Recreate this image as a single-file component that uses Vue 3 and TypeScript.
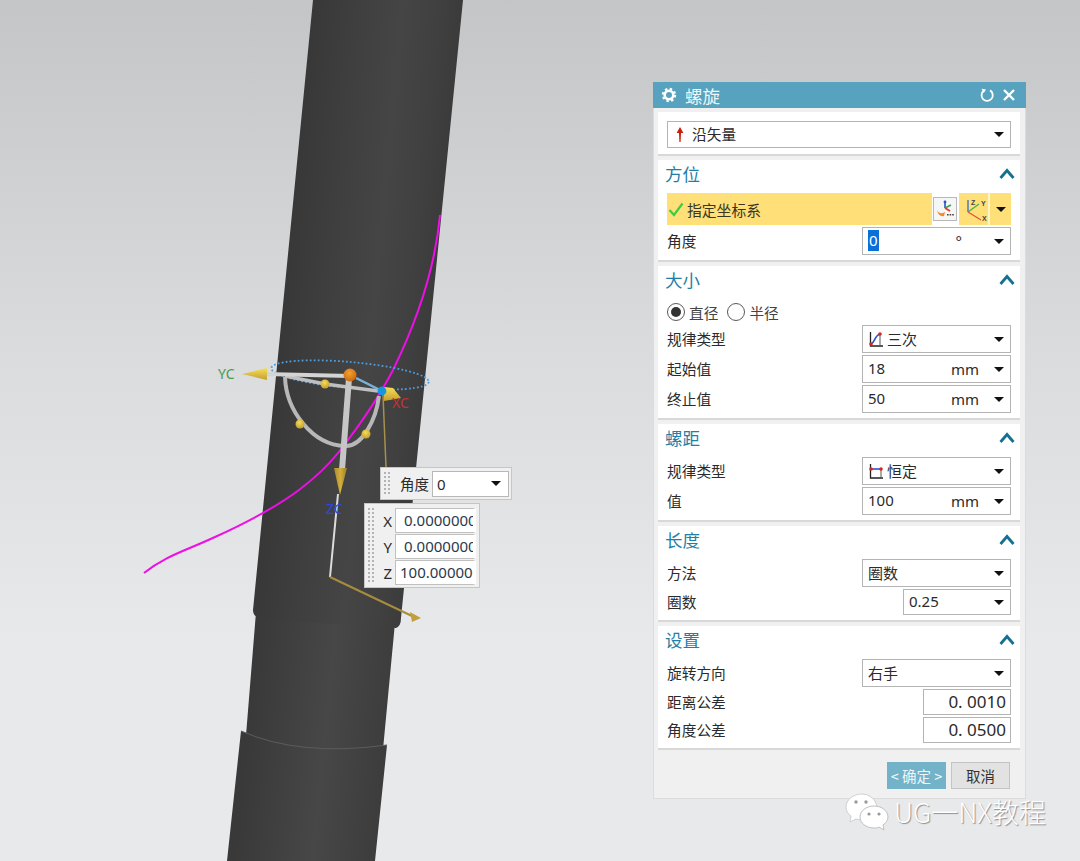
<script setup lang="ts">
type Row = {
  label: string
  value: string
  unit?: string
  icon?: 'cubic' | 'flat'
  size?: 'sm' | 'xs'
  caret?: boolean
}
type Section = { title: string; cls: string; rows: Row[] }

const sizeRows: Row[] = [
  { label: '规律类型', value: '三次', icon: 'cubic', caret: true },
  { label: '起始值', value: '18', unit: 'mm', caret: true },
  { label: '终止值', value: '50', unit: 'mm', caret: true },
]

const sections: Section[] = [
  {
    title: '螺距',
    cls: 'sec-pitch',
    rows: [
      { label: '规律类型', value: '恒定', icon: 'flat', caret: true },
      { label: '值', value: '100', unit: 'mm', caret: true },
    ],
  },
  {
    title: '长度',
    cls: 'sec-length',
    rows: [
      { label: '方法', value: '圈数', caret: true },
      { label: '圈数', value: '0.25', size: 'sm', caret: true },
    ],
  },
  {
    title: '设置',
    cls: 'sec-settings',
    rows: [
      { label: '旋转方向', value: '右手', caret: true },
      { label: '距离公差', value: '0. 0010', size: 'xs' },
      { label: '角度公差', value: '0. 0500', size: 'xs' },
    ],
  },
]

// the boxes are narrower than the values, as in NX
const coords = [
  { axis: 'X', value: '0.00000000', pad: 8 },
  { axis: 'Y', value: '0.00000000', pad: 8 },
  { axis: 'Z', value: '100.00000000', pad: 4 },
]
</script>

<template>
  <div class="stage">
    <!-- model and handles -->
    <svg class="scene" width="1080" height="861" viewBox="0 0 1080 861">
      <defs>
        <linearGradient id="bodyA" gradientUnits="userSpaceOnUse" x1="313" y1="0" x2="461" y2="14">
          <stop offset="0" stop-color="#383838" />
          <stop offset="0.3" stop-color="#3f3f3f" />
          <stop offset="0.6" stop-color="#454545" />
          <stop offset="0.85" stop-color="#404040" />
          <stop offset="1" stop-color="#3b3b3b" />
        </linearGradient>
        <linearGradient id="bodyB" gradientUnits="userSpaceOnUse" x1="250" y1="700" x2="392" y2="714">
          <stop offset="0" stop-color="#393939" />
          <stop offset="0.55" stop-color="#474747" />
          <stop offset="1" stop-color="#3c3c3c" />
        </linearGradient>
        <linearGradient id="cone" x1="0" y1="0" x2="0" y2="1">
          <stop offset="0" stop-color="#f7de58" />
          <stop offset="1" stop-color="#c4a02e" />
        </linearGradient>
        <linearGradient id="coneDark" x1="0" y1="0" x2="1" y2="0">
          <stop offset="0" stop-color="#a98c30" />
          <stop offset="0.5" stop-color="#d2ae3c" />
          <stop offset="1" stop-color="#9a7f2a" />
        </linearGradient>
        <radialGradient id="ballOrange" cx="0.45" cy="0.35" r="0.7">
          <stop offset="0" stop-color="#f5a030" />
          <stop offset="1" stop-color="#c8640c" />
        </radialGradient>
        <radialGradient id="ballYellow" cx="0.45" cy="0.35" r="0.7">
          <stop offset="0" stop-color="#f5dc5a" />
          <stop offset="1" stop-color="#c09a28" />
        </radialGradient>
      </defs>

      <polygon points="256,612 396,612 382,760 244,760" fill="url(#bodyB)" />
      <path d="M241 731 Q300 757 387 745 L375 861 L227 861 Z" fill="url(#bodyB)" />
      <path d="M241 731 Q300 757 387 745" fill="none" stroke="#5c5c5c" stroke-width="1" />
      <path d="M313 0 L463 0 L401 618 Q401 626 396 628 L300 622 L257 617 Q253 615 253 610 Z" fill="url(#bodyA)" />

      <path
        d="M144 573 C165 556 185 551 215 537 C250 521 275 508 299 490 C320 474 330 463 338 453 C360 425 380 395 393 370 C415 325 435 270 440 215"
        fill="none" stroke="#ee0fe6" stroke-width="2"
      />

      <ellipse
        cx="350" cy="375" rx="79" ry="13" transform="rotate(5 350 375)"
        fill="none" stroke="#4a9ee0" stroke-width="1.8" stroke-dasharray="1.8 2.2"
      />

      <path d="M285 377 C286 410 312 445 345 446 C362 447 376 420 379 396" fill="none" stroke="#b8b8b8" stroke-width="4" />
      <path d="M285 376 L325 384 L378 391" fill="none" stroke="#bfbfbf" stroke-width="3.5" />
      <line x1="356" y1="378" x2="382" y2="391" stroke="#7ab4d8" stroke-width="2.5" />
      <line x1="265" y1="374" x2="350" y2="376" stroke="#d4d4d4" stroke-width="4" />
      <line x1="349" y1="378" x2="342" y2="470" stroke="#c6c6c6" stroke-width="6" />
      <line x1="338" y1="494" x2="330" y2="577" stroke="#dcdcdc" stroke-width="2" />
      <polyline points="383,395 386,467" fill="none" stroke="#a88f4c" stroke-width="1.5" />
      <line x1="330" y1="577" x2="412" y2="616" stroke="#a88c3e" stroke-width="2" />
      <path d="M410 612 L421 618 L412 622 Z" fill="#c29f3e" />

      <polygon points="242,374 267,368 267,380" fill="url(#cone)" />
      <polygon points="384,387 393,388 401,398 384,401" fill="url(#cone)" />
      <polygon points="334,468 347,468 340,495" fill="url(#coneDark)" />

      <circle cx="325" cy="384" r="4.5" fill="url(#ballYellow)" />
      <circle cx="300" cy="424" r="4.5" fill="url(#ballYellow)" />
      <circle cx="366" cy="434" r="4.5" fill="url(#ballYellow)" />
      <circle cx="350" cy="375" r="6.5" fill="url(#ballOrange)" />
      <circle cx="382" cy="391" r="4.4" fill="#1496e0" />

      <text x="218" y="379" class="axis" fill="#4a9a50">YC</text>
      <text x="392" y="408" class="axis" fill="#c83030">XC</text>
      <text x="326" y="514" class="axis" fill="#2848e0">ZC</text>
    </svg>

    <!-- floating handles on the model -->
    <div class="pop pop-angle">
      <span class="grip"></span>
      <span class="pop-label">角度</span>
      <div class="pop-select">
        <span>0</span>
        <i class="caret"></i>
      </div>
    </div>
    <div class="pop pop-xyz">
      <span class="grip"></span>
      <div class="xyz-rows">
        <div v-for="c in coords" :key="c.axis" class="xyz-row">
          <span class="xyz-axis">{{ c.axis }}</span>
          <div class="xyz-input" :style="{ paddingLeft: c.pad + 'px' }"><span>{{ c.value }}</span></div>
        </div>
      </div>
    </div>

    <!-- helix dialog -->
    <div class="dialog">
      <div class="titlebar">
        <svg width="16" height="16" viewBox="0 0 16 16" class="gear">
          <circle cx="8" cy="8" r="4.3" fill="none" stroke="#fff" stroke-width="2.6" />
          <circle cx="8" cy="8" r="6.2" fill="none" stroke="#fff" stroke-width="2" stroke-dasharray="2.4 2.47" />
        </svg>
        <span class="title">螺旋</span>
        <span class="spacer"></span>
        <svg width="16" height="16" viewBox="0 0 16 16">
          <path d="M5 3.6 A5.6 5.6 0 1 0 11 3.4" fill="none" stroke="#fff" stroke-width="1.8" />
          <path d="M2.6 1.8 L7 2.4 L4.6 6 Z" fill="#fff" />
        </svg>
        <svg width="14" height="14" viewBox="0 0 14 14" class="close">
          <path d="M2 2 L12 12 M12 2 L2 12" stroke="#fff" stroke-width="2.4" fill="none" />
        </svg>
      </div>

      <div class="body">
        <section class="sec sec-type">
          <div class="field field-wide">
            <svg width="10" height="16" viewBox="0 0 10 16" class="red-arrow">
              <path d="M5 0 L8.4 6 L6 6 L5.6 15 L4.4 15 L4 6 L1.6 6 Z" fill="#c8200c" />
            </svg>
            <span class="val cjk">沿矢量</span>
            <i class="caret"></i>
          </div>
        </section>

        <section class="sec sec-orient">
          <div class="head">
            <span>方位</span>
            <svg width="16" height="12" viewBox="0 0 16 12" class="chev"><path d="M1.5 10 L8 2.5 L14.5 10" /></svg>
          </div>
          <div class="rows">
            <div class="pick">
              <div class="pick-main">
                <svg width="16" height="15" viewBox="0 0 16 15">
                  <path d="M1.5 8 L6 13 L14.5 1.5" fill="none" stroke="#3fcb42" stroke-width="2.2" />
                </svg>
                <span>指定坐标系</span>
              </div>
              <div class="pick-btn">
                <svg width="20" height="20" viewBox="0 0 20 20">
                  <path d="M10 9 V3" stroke="#2a55c8" stroke-width="1.6" />
                  <circle cx="10" cy="3" r="1.4" fill="#2a55c8" />
                  <path d="M10 9 L16 6" stroke="#3aa648" stroke-width="1.6" />
                  <path d="M10 9 L15 12" stroke="#d83a2a" stroke-width="1.6" />
                  <path d="M2 11 C4 15 7 15 10 13 L9 17 C6 18 3 16 2 11 Z" fill="#f08c24" />
                  <path d="M12 15 h1.6 v1.6 h-1.6 z M14.6 15 h1.6 v1.6 h-1.6 z M17.2 15 h1.6 v1.6 h-1.6 z" fill="#444" />
                </svg>
              </div>
              <div class="pick-csys">
                <svg width="26" height="26" viewBox="0 0 26 26">
                  <path d="M7 16 V4" stroke="#2a6fd0" stroke-width="1.3" />
                  <path d="M7 16 L18 8" stroke="#48b048" stroke-width="1.3" />
                  <path d="M7 16 L20 24" stroke="#e0503a" stroke-width="1.3" />
                  <text x="10" y="9" class="csys-t">Z</text>
                  <text x="20" y="10" class="csys-t">Y</text>
                  <text x="21" y="25" class="csys-t">X</text>
                </svg>
              </div>
              <div class="pick-drop"><i class="caret"></i></div>
            </div>
            <div class="row">
              <span class="lbl">角度</span>
              <div class="field">
                <span class="val"><b class="sel">0</b></span>
                <span class="unit deg">°</span>
                <i class="caret"></i>
              </div>
            </div>
          </div>
        </section>

        <section class="sec sec-size">
          <div class="head">
            <span>大小</span>
            <svg width="16" height="12" viewBox="0 0 16 12" class="chev"><path d="M1.5 10 L8 2.5 L14.5 10" /></svg>
          </div>
          <div class="radios">
            <span class="radio on"></span><span class="radio-t">直径</span>
            <span class="radio"></span><span class="radio-t">半径</span>
          </div>
          <div class="rows">
            <div v-for="r in sizeRows" :key="r.label" class="row">
              <span class="lbl">{{ r.label }}</span>
              <div class="field">
                <svg v-if="r.icon" width="16" height="17" viewBox="0 0 16 17" class="law">
                  <path d="M2.5 1 V15 H15" fill="none" stroke="#222" stroke-width="1.3" />
                  <path d="M12 3 V15" fill="none" stroke="#555" stroke-width="1" />
                  <path d="M3 13 C7 12 6 5 12 3" fill="none" stroke="#3050d0" stroke-width="1.6" />
                  <circle cx="3" cy="13" r="1.8" fill="#d8281c" />
                  <circle cx="12" cy="3" r="1.8" fill="#d8281c" />
                </svg>
                <span class="val">{{ r.value }}</span>
                <span v-if="r.unit" class="unit">{{ r.unit }}</span>
                <i class="caret"></i>
              </div>
            </div>
          </div>
        </section>

        <section v-for="s in sections" :key="s.title" class="sec" :class="s.cls">
          <div class="head">
            <span>{{ s.title }}</span>
            <svg width="16" height="12" viewBox="0 0 16 12" class="chev"><path d="M1.5 10 L8 2.5 L14.5 10" /></svg>
          </div>
          <div class="rows">
            <div v-for="r in s.rows" :key="r.label" class="row" :class="r.size ? 'row-' + r.size : ''">
              <span class="lbl">{{ r.label }}</span>
              <div class="field" :class="r.size ? 'field-' + r.size : ''">
                <svg v-if="r.icon" width="16" height="17" viewBox="0 0 16 17" class="law">
                  <path d="M2.5 1 V15 H15" fill="none" stroke="#222" stroke-width="1.3" />
                  <path d="M13 6 V15" fill="none" stroke="#555" stroke-width="1" />
                  <path d="M3 6 H13" fill="none" stroke="#3050d0" stroke-width="1.6" />
                  <circle cx="3" cy="6" r="1.8" fill="#d8281c" />
                  <circle cx="13" cy="6" r="1.8" fill="#d8281c" />
                </svg>
                <span class="val">{{ r.value }}</span>
                <span v-if="r.unit" class="unit">{{ r.unit }}</span>
                <i v-if="r.caret" class="caret"></i>
              </div>
            </div>
          </div>
        </section>

        <div class="actions">
          <button class="btn btn-ok">&lt; 确定 &gt;</button>
          <button class="btn">取消</button>
        </div>
      </div>
    </div>

    <!-- account watermark -->
    <div class="mark">
      <svg width="44" height="38" viewBox="0 0 44 38">
        <path d="M17 1 C8 1 1 7 1 14 C1 18 3 21 6 23 L5 29 L11 26 C14 27 18 27 20 27 L32 14 C31 7 25 1 17 1 Z" fill="#fff" stroke="#cfd0d2" />
        <path d="M29 13 C21 13 15 18 15 24 C15 30 21 35 29 35 C31 35 33 35 34 34 L39 37 L38 32 C41 30 43 27 43 24 C43 18 37 13 29 13 Z" fill="#fff" stroke="#bfc0c2" />
        <circle cx="11" cy="9" r="1.7" fill="#9a9a9a" />
        <circle cx="21" cy="9" r="1.7" fill="#9a9a9a" />
        <circle cx="24" cy="21" r="1.6" fill="#9a9a9a" />
        <circle cx="34" cy="21" r="1.6" fill="#9a9a9a" />
      </svg>
      <span>UG一NX教程</span>
    </div>
  </div>
</template>

<style scoped>
.stage {
  position: relative;
  width: 1080px;
  height: 861px;
  overflow: hidden;
  background: linear-gradient(180deg, #c3c5c7 0%, #d9dbdd 40%, #e8e9eb 75%, #e8e9eb 100%);
  font-family: "Noto Sans CJK SC", "Noto Sans", sans-serif;
  color: #2b2b2b;
}
.scene { position: absolute; left: 0; top: 0; }
.axis { font-family: "Noto Sans", sans-serif; font-size: 14px; }
.csys-t { font-family: "Liberation Sans", sans-serif; font-size: 7px; font-weight: 700; fill: #444; }

/* popups on the model */
.pop {
  position: absolute;
  display: flex;
  background: #f0f0f0;
  border: 1px solid #c6c6c6;
  box-sizing: border-box;
}
.grip {
  width: 8px;
  margin: 3px 0 3px 2px;
  flex: none;
  align-self: stretch;
  background-image: radial-gradient(circle, #b4b4b4 1px, transparent 1.2px);
  background-size: 4px 4px;
}
.pop-angle { left: 380px; top: 467px; width: 132px; height: 33px; align-items: center; }
.pop-label { margin-left: 9px; font-size: 14.5px; width: 32px; flex: none; }
.pop-select {
  width: 77px;
  height: 26px;
  box-sizing: border-box;
  border: 1px solid #b8b8b8;
  background: #fff;
  display: flex;
  align-items: center;
  padding: 0 7px 0 4px;
  justify-content: space-between;
  font: 15px "Noto Sans", sans-serif;
}
.pop-xyz { left: 364px; top: 503px; width: 116px; height: 85px; }
.xyz-rows { display: flex; flex-direction: column; gap: 1px; margin: 4px 0 0 0; }
.xyz-row { display: flex; align-items: center; height: 25px; }
.xyz-axis { width: 17px; text-align: right; margin-right: 3px; font: 15px "Noto Sans", sans-serif; }
.xyz-input {
  width: 81px;
  height: 25px;
  box-sizing: border-box;
  border: 1px solid #c0c0c0;
  border-right: 3px solid #fff;
  background: #fff;
  overflow: hidden;
  font: 15px/23px "Noto Sans", sans-serif;
  white-space: nowrap;
  color: #2a3a4a;
}

/* dialog */
.dialog {
  position: absolute;
  left: 653px;
  top: 82px;
  width: 373px;
  height: 717px;
  box-sizing: border-box;
  background: #f0f0f0;
  border-right: 1px solid #dcdcdc;
  border-bottom: 1px solid #dcdcdc;
  border-left: 1px solid #dcdcdc;
}
.titlebar {
  height: 26px;
  margin: 0 -1px;
  background: #57a3bf;
  display: flex;
  align-items: center;
  color: #fff;
}
.gear { margin-left: 8px; }
.title { margin-left: 8px; font-size: 17.5px; color: #eef6f9; }
.spacer { flex: 1; }
.close { margin: 0 10px 0 7px; }
.body { padding: 4px 5px 0 4px; display: flex; flex-direction: column; gap: 4px; }
.sec {
  background: #fff;
  border-bottom: 2px solid #d8d8d8;
  box-sizing: border-box;
  padding: 0 9px;
}
.sec-type { height: 44px; padding-top: 9px; }
.sec-orient { height: 102px; }
.sec-size { height: 154px; }
.sec-pitch { height: 98px; }
.sec-length { height: 96px; }
.sec-settings { height: 124px; }
.head {
  height: 33px;
  margin: 0 -5px 0 -2px;
  display: flex;
  align-items: center;
  justify-content: space-between;
  font-size: 17.5px;
  color: #1f7fa6;
  padding-bottom: 6px;
  box-sizing: border-box;
}
.chev { fill: none; stroke: #16708f; stroke-width: 2.8; margin-right: 1px; }
.rows { display: flex; flex-direction: column; gap: 2px; }
.row { display: flex; align-items: center; justify-content: space-between; height: 28px; }
.row-sm, .row-xs { height: 26px; }
.lbl { font-size: 14.7px; margin-top: -2px; }
.field {
  width: 149px;
  height: 100%;
  box-sizing: border-box;
  border: 1px solid #b4b4b4;
  background: #fff;
  display: flex;
  align-items: center;
  padding: 0 6px 0 5px;
  font-size: 15px;
}
.field-wide { width: 344px; height: 27px; }
.field-sm { width: 108px; }
.field-xs { width: 88px; justify-content: flex-end; padding-right: 4px; font: 17px "Noto Sans", sans-serif; white-space: pre; }
.field-xs .val { flex: none; font-size: 17px; }
.val { flex: 1; font-family: "Noto Sans", "Noto Sans CJK SC", sans-serif; white-space: pre; margin-top: -2px; }
.val.cjk { font-family: "Noto Sans CJK SC", sans-serif; font-size: 14.7px; }
.red-arrow { margin: 0 7px 0 2px; }
.law { margin: 0 3px 0 0; flex: none; }
.sel { background: #0a6fd8; color: #fff; font-weight: 400; display: inline-block; padding: 0 1px; line-height: 21px; }
.unit { font: 15px "Noto Sans", sans-serif; margin-right: 15px; }
.deg { margin-right: 32px; }
.caret {
  flex: none;
  margin-left: auto;
  width: 0;
  height: 0;
  border-left: 5px solid transparent;
  border-right: 5px solid transparent;
  border-top: 5px solid #111;
}
.pick { display: flex; align-items: center; height: 32px; }
.pick-main {
  width: 265px;
  height: 32px;
  background: #ffdf78;
  display: flex;
  align-items: center;
  gap: 3px;
  padding-left: 1px;
  box-sizing: border-box;
  font-size: 14.8px;
  color: #3a3420;
}
.pick-btn {
  width: 24px;
  height: 24px;
  margin: 0 2px 0 1px;
  box-sizing: border-box;
  border: 1px solid #b8b8b8;
  background: #f6f6f6;
  display: flex;
  align-items: center;
  justify-content: center;
}
.pick-csys {
  width: 31px;
  height: 32px;
  background: #ffdf78;
  border-right: 2px solid #fff3c8;
  box-sizing: border-box;
  display: flex;
  align-items: center;
  justify-content: center;
}
.pick-drop {
  flex: 1;
  height: 32px;
  background: #ffdf78;
  display: flex;
  align-items: center;
  justify-content: center;
}
.pick-drop .caret { margin: 0; }
.radios { display: flex; align-items: center; height: 26px; font-size: 14.7px; }
.radio {
  width: 18px;
  height: 18px;
  box-sizing: border-box;
  border: 1px solid #5a5a5a;
  border-radius: 50%;
  background: #fff;
  display: flex;
  align-items: center;
  justify-content: center;
}
.radio.on::after {
  content: "";
  width: 10px;
  height: 10px;
  border-radius: 50%;
  background: #333;
}
.radio-t { margin: 0 9px 0 4px; color: #444; }
.actions { display: flex; justify-content: flex-end; gap: 5px; padding: 8px 10px 0 0; }
.btn {
  width: 59px;
  height: 27px;
  padding: 0;
  border: 1px solid #c4c4c4;
  background: #e2e2e2;
  font-family: "Noto Sans CJK SC", sans-serif;
  font-size: 14.5px;
  color: #333;
}
.btn-ok { background: #72b3c9; border-color: #72b3c9; color: #eef6f9; }

/* watermark */
.mark {
  position: absolute;
  left: 845px;
  top: 792px;
  display: flex;
  align-items: center;
  gap: 5px;
  font-size: 27px;
  font-weight: 300;
  color: #fff;
  text-shadow: 1px 1px 1px #8e8e8e;
  white-space: nowrap;
}
</style>

<style>
html, body { margin: 0; padding: 0; background: #e8e9eb; }
</style>
